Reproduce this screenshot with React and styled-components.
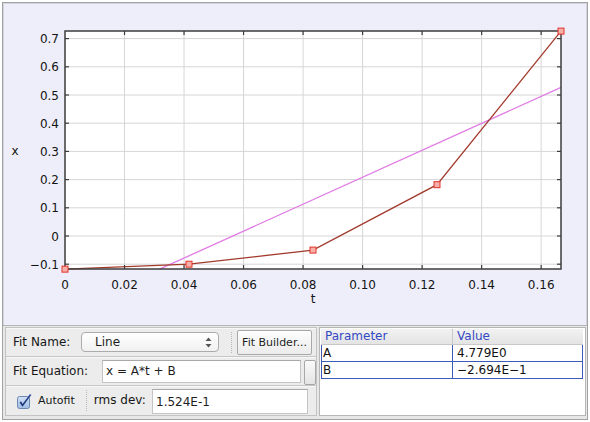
import React from "react";
import styled, { createGlobalStyle } from "styled-components";

const Global = createGlobalStyle`
  html, body { margin: 0; padding: 0; background: #fff; }
  body { font-family: "DejaVu Sans", "Liberation Sans", sans-serif; color: #1e1e1e; }
`;

const Window = styled.div`
  width: 590px;
  height: 422px;
  padding: 2px;
  box-sizing: border-box;
  background: #fff;
`;

const Frame = styled.div`
  height: 418px;
  border: 1px solid #a2a2a2;
  box-sizing: border-box;
  display: flex;
  flex-direction: column;
`;

const PlotPanel = styled.div`
  height: 322px;
  flex: none;
  background: #eeeefa;
  box-shadow: inset 1px 1px 0 #d4d4dc, inset -1px 0 0 #d4d4dc;
`;

const Divider = styled.div`
  height: 1px;
  flex: none;
  background: #b4b4b4;
`;

const Controls = styled.div`
  flex: 1;
  display: flex;
  gap: 2px;
  padding: 1px 1px 3px 2px;
  background: #e7e7e7;
`;

const LeftPane = styled.div`
  width: 312px;
  flex: none;
  display: flex;
  flex-direction: column;
  border: 1px solid #c3c3c3;
  box-sizing: border-box;
  background: #ececec;
`;

const Row = styled.div`
  height: 28px;
  flex: none;
  display: flex;
  align-items: center;
  padding: 0 ${(p) => p.$right ?? 4}px 0 ${(p) => p.$left ?? 7}px;
  border-top: ${(p) => (p.$first ? "none" : "1px solid #c6c6c6")};
  box-shadow: inset 0 1px 0 #f8f8f8;
`;

const Label = styled.span`
  font-size: ${(p) => p.$size ?? 12}px;
  white-space: nowrap;
  color: #161616;
  margin-right: ${(p) => (p.$push ? "auto" : "0")};
  margin-left: ${(p) => p.$ml ?? 0}px;
`;

const Select = styled.div`
  width: 138px;
  height: 20px;
  box-sizing: border-box;
  border: 1px solid #acacac;
  border-radius: 4px;
  background: linear-gradient(#ffffff, #f1f1f1);
  display: flex;
  align-items: center;
  justify-content: space-between;
  padding: 0 6px 0 13px;
  font-size: 12px;
`;

const DotSep = styled.div`
  width: 0;
  height: 21px;
  border-left: 1px dotted #b8b8b8;
  margin: 0 ${(p) => p.$r ?? 5}px 0 ${(p) => p.$l ?? 12}px;
`;

const Button = styled.div`
  width: 75px;
  height: 25px;
  box-sizing: border-box;
  border: 1px solid #a9a9a9;
  border-radius: 2px;
  background: linear-gradient(#fdfdfd, #ececec);
  display: flex;
  align-items: center;
  justify-content: center;
  font-size: 11px;
  white-space: nowrap;
`;

const Field = styled.div`
  width: ${(p) => p.$w}px;
  height: ${(p) => p.$h}px;
  box-sizing: border-box;
  background: #fff;
  border: 1px solid #c4c4c4;
  border-top-color: #a8a8a8;
  display: flex;
  align-items: center;
  padding-left: 3px;
  font-size: 12px;
  align-self: ${(p) => p.$self ?? "center"};
`;

const Stub = styled.div`
  width: 12px;
  height: 25px;
  margin-left: 3px;
  box-sizing: border-box;
  border: 1px solid #a8a8a8;
  border-radius: 2px;
  background: linear-gradient(#fafafa, #e4e4e4);
  align-self: flex-end;
`;

const TableBox = styled.div`
  flex: 1;
  border: 1px solid #b6b6b6;
  box-sizing: border-box;
  background: #fff;
  padding: 1px;
  display: flex;
  flex-direction: column;
`;

const Grid = styled.div`
  display: grid;
  grid-template-columns: 131px 1fr;
  margin-right: 1px;
`;

const HeadCell = styled.div`
  height: 16px;
  box-sizing: border-box;
  background: linear-gradient(#f2f2f2, #e4e4e4);
  border-bottom: 1px solid #c8c8c8;
  border-left: ${(p) => (p.$first ? "none" : "1px solid #c8c8c8")};
  color: #3448c4;
  font-size: 12px;
  padding-left: 4px;
  line-height: 15px;
`;

const Cell = styled.div`
  height: 17px;
  box-sizing: border-box;
  border-bottom: 1px solid #3f5bb8;
  border-left: 1px solid #3f5bb8;
  border-right: ${(p) => (p.$last ? "1px solid #3f5bb8" : "none")};
  font-size: 12px;
  padding-left: ${(p) => (p.$first ? 1 : 4)}px;
  line-height: 16px;
  color: #111;
`;

const X0 = 65, X1 = 561, Y0 = 31, Y1 = 269;
const tx = (t) => X0 + (t / 0.166667) * (X1 - X0);
const vy = (v) => 236 - v * 282;

const data = [
  [0, -0.1175],
  [1 / 24, -0.1],
  [2 / 24, -0.05],
  [3 / 24, 0.182],
  [4 / 24, 0.7265],
];
const xt = [0, 0.02, 0.04, 0.06, 0.08, 0.1, 0.12, 0.14, 0.16];
const yt = [-0.1, 0, 0.1, 0.2, 0.3, 0.4, 0.5, 0.6, 0.7];
const fmtX = (t) => (t === 0 ? "0" : t.toFixed(2));
const fmtY = (v) => (Math.abs(v) < 1e-9 ? "0" : v < 0 ? "\u2212" + Math.abs(v).toFixed(1) : v.toFixed(1));

function Chart() {
  const A = 4.779, B = -0.2694;
  const tStart = (-0.1175 - B) / A;
  const tEnd = 0.166667;
  return (
    <svg width="584" height="322" viewBox="3 3 584 322" style={{ display: "block" }}>
      <rect x={X0} y={Y0} width={X1 - X0} height={Y1 - Y0} fill="#fff" />
      {xt.slice(1).map((t) => (
        <line key={"gx" + t} x1={tx(t)} x2={tx(t)} y1={Y0} y2={Y1} stroke="#d6d6d6" strokeWidth="1" />
      ))}
      {yt.map((v) => (
        <line key={"gy" + v} x1={X0} x2={X1} y1={vy(v)} y2={vy(v)} stroke="#d6d6d6" strokeWidth="1" />
      ))}
      <line x1={tx(tStart)} y1={vy(A * tStart + B)} x2={tx(tEnd)} y2={vy(A * tEnd + B)} stroke="#e07ce4" strokeWidth="1.3" />
      <polyline
        points={data.map(([t, v]) => `${tx(t)},${vy(v)}`).join(" ")}
        fill="none"
        stroke="#a23a2c"
        strokeWidth="1.3"
      />
      <rect x={X0} y={Y0} width={X1 - X0} height={Y1 - Y0} fill="none" stroke="#3c3c3c" strokeWidth="1.5" />
      {xt.slice(1).map((t) => (
        <g key={"tx" + t}>
          <line x1={tx(t)} x2={tx(t)} y1={Y0} y2={Y0 + 4} stroke="#3c3c3c" strokeWidth="1.2" />
          <line x1={tx(t)} x2={tx(t)} y1={Y1} y2={Y1 - 4} stroke="#3c3c3c" strokeWidth="1.2" />
        </g>
      ))}
      {yt.map((v) => (
        <g key={"ty" + v}>
          <line x1={X0} x2={X0 + 4} y1={vy(v)} y2={vy(v)} stroke="#3c3c3c" strokeWidth="1.2" />
          <line x1={X1} x2={X1 - 4} y1={vy(v)} y2={vy(v)} stroke="#3c3c3c" strokeWidth="1.2" />
        </g>
      ))}
      {data.map(([t, v]) => (
        <rect key={"m" + t} x={tx(t) - 3} y={vy(v) - 3} width="6" height="6" fill="#f6b0a8" stroke="#e2322a" strokeWidth="1" />
      ))}
      <g fontFamily="DejaVu Sans, sans-serif" fontSize="12" fill="#141414">
        {yt.map((v) => (
          <text key={"ly" + v} x={59} y={vy(v) + 4.5} textAnchor="end">
            {fmtY(v)}
          </text>
        ))}
        {xt.map((t) => (
          <text key={"lx" + t} x={tx(t)} y={289} textAnchor="middle">
            {fmtX(t)}
          </text>
        ))}
        <text x={313} y={302.5} textAnchor="middle">t</text>
        <text x={15} y={155} textAnchor="middle">x</text>
      </g>
    </svg>
  );
}

function UpDown() {
  return (
    <svg width="7" height="11" viewBox="0 0 7 11">
      <path d="M3.5 0.5 L6.5 4 L0.5 4 Z" fill="#555" />
      <path d="M3.5 10.5 L6.5 7 L0.5 7 Z" fill="#555" />
    </svg>
  );
}

function Check() {
  return (
    <svg width="16" height="15" viewBox="0 0 16 15" style={{ flex: "none", marginTop: 3 }}>
      <defs>
        <linearGradient id="cb" x1="0" y1="0" x2="0" y2="1">
          <stop offset="0" stopColor="#d4e2f6" />
          <stop offset="1" stopColor="#9fbde6" />
        </linearGradient>
        <linearGradient id="ck" x1="0" y1="0" x2="0" y2="1">
          <stop offset="0" stopColor="#2a4f9e" />
          <stop offset="1" stopColor="#1a3270" />
        </linearGradient>
      </defs>
      <rect x="0.5" y="2.5" width="12" height="12" rx="2" fill="url(#cb)" stroke="#6d86b0" />
      <path d="M2.5 8.5 L5.5 12.8 L14.5 0.8 L12.8 0.3 L5.6 10 L4 7.3 Z" fill="url(#ck)" />
    </svg>
  );
}

export default function App() {
  return (
    <>
      <Global />
      <Window>
        <Frame>
          <PlotPanel>
            <Chart />
          </PlotPanel>
          <Divider />
          <Controls>
            <LeftPane>
              <Row $first>
                <Label $push>Fit Name:</Label>
                <Select>
                  <span>Line</span>
                  <UpDown />
                </Select>
                <DotSep />
                <Button>Fit Builder...</Button>
              </Row>
              <Row $right={0}>
                <Label $push>Fit Equation:</Label>
                <Field $w={199} $h={23}>x = A*t + B</Field>
                <Stub />
              </Row>
              <Row $left={11} $right={8}>
                <Check />
                <Label $size={11} $ml={5}>Autofit</Label>
                <DotSep $l={11} $r={7} />
                <Label $push>rms dev:</Label>
                <Field $w={156} $h={25} $self="flex-end">1.524E-1</Field>
              </Row>
            </LeftPane>
            <TableBox>
              <Grid>
                <HeadCell $first>Parameter</HeadCell>
                <HeadCell>Value</HeadCell>
                <Cell $first>A</Cell>
                <Cell $last>4.779E0</Cell>
                <Cell $first>B</Cell>
                <Cell $last>{"\u2212"}2.694E{"\u2212"}1</Cell>
              </Grid>
            </TableBox>
          </Controls>
        </Frame>
      </Window>
    </>
  );
}
